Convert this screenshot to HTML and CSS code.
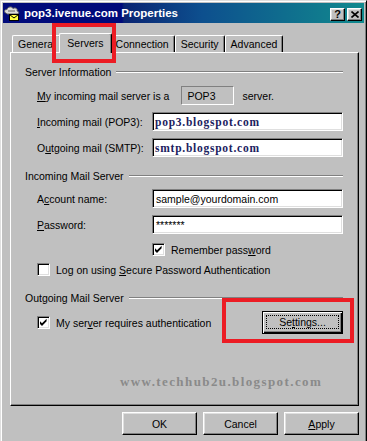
FILE: index.html
```html
<!DOCTYPE html>
<html lang="en">
<head>
    <meta charset="UTF-8">
    <title>pop3.ivenue.com Properties</title>
    <link rel="stylesheet" href="styles.css">
</head>
<body>
    <div class="window">
        <div class="titlebar">
            <svg class="app-icon" viewBox="0 0 16 16">
                <path d="M2 8 C0 8 0 4 3 4.5 C3.5 1.5 8 1 9 3.5 C11 2 14 3.5 13 6 C15.5 6.5 15 9 13 9 L3 9 Z" fill="#dcdcdc" stroke="#606060" stroke-width="1"/>
                <rect x="4" y="5" width="7" height="2" fill="#a0a0a0"/>
                <rect x="5.5" y="9.5" width="9" height="6" fill="#ffff40" stroke="#000" stroke-width="1"/>
                <path d="M5.5 9.5 L10 13 L14.5 9.5" fill="none" stroke="#000" stroke-width="1"/>
            </svg>
            <span class="title">pop3.ivenue.com Properties</span>
            <div class="caption-buttons">
                <span class="cap-btn help">?</span>
                <span class="cap-btn">
                    <svg viewBox="0 0 8 7" class="close-x">
                        <path d="M0.5 0.5 L7.5 6.5 M7.5 0.5 L0.5 6.5" stroke="#000" stroke-width="1.6"/>
                    </svg>
                </span>
            </div>
        </div>

        <div class="dialog">
            <div class="tabs">
                <div class="tab">General</div>
                <div class="tab active">Servers<span class="mark mark-tab"></span></div>
                <div class="tab">Connection</div>
                <div class="tab">Security</div>
                <div class="tab">Advanced</div>
            </div>

            <div class="panel">
                <div class="group-head">
                    <span>Server Information</span>
                    <span class="etch"></span>
                </div>
                <div class="row first">
                    <span><u>M</u>y incoming mail server is a</span>
                    <span class="server-type">POP3</span>
                    <span class="after">server.</span>
                </div>
                <div class="row">
                    <span class="label"><u>I</u>ncoming mail (POP3):</span>
                    <span class="field typed">pop3.blogspot.com</span>
                </div>
                <div class="row">
                    <span class="label">O<u>u</u>tgoing mail (SMTP):</span>
                    <span class="field typed">smtp.blogspot.com</span>
                </div>

                <div class="group-head">
                    <span>Incoming Mail Server</span>
                    <span class="etch"></span>
                </div>
                <div class="row">
                    <span class="label">A<u>c</u>count name:</span>
                    <span class="field">sample@yourdomain.com</span>
                </div>
                <div class="row">
                    <span class="label"><u>P</u>assword:</span>
                    <span class="field">*******</span>
                </div>
                <div class="check-row indent">
                    <span class="checkbox">
                        <svg viewBox="0 0 11 11"><polygon points="2,4.3 4,6.3 8.6,1.7 8.6,4.3 4,8.9 2,6.9"/></svg>
                    </span>
                    <span>Remember pass<u>w</u>ord</span>
                </div>
                <div class="check-row spa">
                    <span class="checkbox"></span>
                    <span>Log on using <u>S</u>ecure Password Authentication</span>
                </div>

                <div class="group-head third">
                    <span>Outgoing Mail Server</span>
                    <span class="etch"></span>
                </div>
                <div class="auth-row">
                    <span class="checkbox">
                        <svg viewBox="0 0 11 11"><polygon points="2,4.3 4,6.3 8.6,1.7 8.6,4.3 4,8.9 2,6.9"/></svg>
                    </span>
                    <span>My ser<u>v</u>er requires authentication</span>
                    <span class="btn default">
                        <span class="focus">Se<u>t</u>tings...</span>
                        <span class="mark mark-btn"></span>
                    </span>
                </div>

                <div class="watermark">www.techhub2u.blogspot.com</div>
            </div>

            <div class="buttons">
                <span class="btn">OK</span>
                <span class="btn">Cancel</span>
                <span class="btn"><u>A</u>pply</span>
            </div>
        </div>
    </div>
</body>
</html>
```

FILE: styles.css
```css
* {
    box-sizing: border-box;
}

html, body {
    margin: 0;
    padding: 0;
    overflow: hidden;
}

body {
    background: #c0c0c0;
    font-family: "Liberation Sans", Arial, sans-serif;
    font-size: 10.5px;
    color: #000;
}

u {
    text-decoration: underline;
    text-underline-offset: 1px;
}

.window {
    width: 367px;
    height: 450px;
    padding: 2px;
    background: #c0c0c0;
    border: 1px solid;
    border-color: #dfdfdf #000 #000 #dfdfdf;
    box-shadow: inset 1px 1px #fff, inset -1px -1px #808080;
}

/* title bar */
.titlebar {
    height: 20px;
    display: flex;
    align-items: center;
    padding: 0 1px;
    background: linear-gradient(90deg, #000a7a 0, #000a7a 119px, #0a2472 121px, #0d4f8e 55%, #118a8e 100%);
}

.app-icon {
    width: 16px;
    height: 16px;
    flex: none;
}

.title {
    margin-left: 4px;
    color: #fff;
    font-weight: bold;
    font-size: 11.5px;
    white-space: nowrap;
}

.caption-buttons {
    margin-left: auto;
    display: flex;
    gap: 2px;
    margin-right: 1px;
    margin-top: 3px;
}

.cap-btn {
    width: 15px;
    height: 13px;
    display: flex;
    align-items: center;
    justify-content: center;
    background: #c0c0c0;
    border: 1px solid;
    border-color: #fff #000 #000 #fff;
    box-shadow: inset -1px -1px #808080, inset 1px 1px #dfdfdf;
    font-weight: bold;
    font-size: 11px;
    line-height: 1;
}

.close-x {
    width: 8px;
    height: 7px;
}

/* dialog body */
.dialog {
    padding: 10px 5px 0 7px;
}

.tabs {
    display: flex;
    align-items: flex-end;
    padding-left: 2px;
    height: 19px;
}

.tab {
    height: 17px;
    padding: 0 5px;
    display: flex;
    align-items: center;
    background: #c0c0c0;
    border: 1px solid;
    border-bottom: none;
    border-color: #fff #000 #000 #fff;
    border-radius: 2px 2px 0 0;
    box-shadow: inset -1px 0 #808080;
    white-space: nowrap;
}

.tab.active {
    position: relative;
    z-index: 2;
    height: 20px;
    margin: 0 -2px -1px;
    padding: 0 7px 2px;
}

.panel {
    position: relative;
    height: 354px;
    border: 1px solid;
    border-color: #fff #000 #000 #fff;
    box-shadow: inset -1px -1px #808080;
    padding: 0 15px 0 14px;
}

.group-head {
    display: flex;
    align-items: center;
    height: 12px;
    margin-top: 13px;
    white-space: nowrap;
}

.group-head.third {
    margin-top: 16px;
}

.etch {
    flex: 1;
    height: 2px;
    margin-left: 5px;
    border-top: 1px solid #808080;
    border-bottom: 1px solid #fff;
}

.row {
    display: flex;
    align-items: center;
    height: 19px;
    margin-top: 7px;
    padding-left: 12px;
    white-space: nowrap;
}

.row.first {
    margin-top: 8px;
}

.label {
    width: 115px;
}

.server-type {
    margin-left: 12px;
    width: 53px;
    height: 19px;
    padding-left: 5px;
    display: flex;
    align-items: center;
    border: 1px solid;
    border-color: #808080 #fff #fff #808080;
}

.after {
    margin-left: 8px;
}

.field {
    flex: 1;
    height: 19px;
    padding-left: 3px;
    display: flex;
    align-items: center;
    background: #fff;
    border: 1px solid;
    border-color: #808080 #fff #fff #808080;
    box-shadow: inset 1px 1px #000, inset -1px -1px #dfdfdf;
}

.field.typed {
    padding-left: 2px;
    font-family: "Liberation Serif", "Times New Roman", serif;
    font-weight: bold;
    font-size: 11.5px;
    letter-spacing: 0.75px;
    color: #1b2160;
}

.check-row {
    display: flex;
    align-items: center;
    gap: 6px;
    height: 13px;
    margin-top: 9px;
    white-space: nowrap;
}

.check-row.indent {
    padding-left: 127px;
}

.check-row.spa {
    margin-top: 7px;
    padding-left: 12px;
}

.checkbox {
    width: 13px;
    height: 13px;
    flex: none;
    background: #fff;
    border: 1px solid;
    border-color: #808080 #fff #fff #808080;
    box-shadow: inset 1px 1px #000, inset -1px -1px #dfdfdf;
}

.checkbox svg {
    display: block;
    width: 11px;
    height: 11px;
}

.auth-row {
    display: flex;
    align-items: center;
    gap: 6px;
    height: 23px;
    margin-top: 7px;
    padding-left: 12px;
    white-space: nowrap;
}

.btn {
    width: 75px;
    height: 23px;
    display: flex;
    align-items: center;
    justify-content: center;
    background: #c0c0c0;
    border: 1px solid;
    border-color: #fff #000 #000 #fff;
    box-shadow: inset -1px -1px #808080, inset 1px 1px #dfdfdf;
}

.btn.default {
    position: relative;
    margin-left: auto;
    width: 81px;
    padding: 3px 3px 4px 3px;
    border-color: #000;
    box-shadow: inset 1px 1px #fff, inset -1px -1px #000, inset -2px -2px #808080;
}

.focus {
    flex: 1;
    align-self: stretch;
    display: flex;
    align-items: center;
    justify-content: center;
    border: 1px dotted #000;
}

.watermark {
    margin-top: 40px;
    height: 16px;
    padding-left: 95px;
    white-space: nowrap;
    font-family: "Liberation Serif", "Times New Roman", serif;
    font-weight: bold;
    font-size: 13px;
    letter-spacing: 1.4px;
    color: #8a8a8a;
}

.buttons {
    display: flex;
    justify-content: flex-end;
    gap: 6px;
    margin-top: 6px;
}

/* red annotation boxes drawn over the screenshot */
.mark {
    position: absolute;
    border: 4px solid #ec1c24;
    pointer-events: none;
}

.mark-tab {
    left: -8px;
    top: -11px;
    width: 64px;
    height: 40px;
}

.mark-btn {
    left: -41px;
    top: -14px;
    width: 132px;
    height: 45px;
}
```
